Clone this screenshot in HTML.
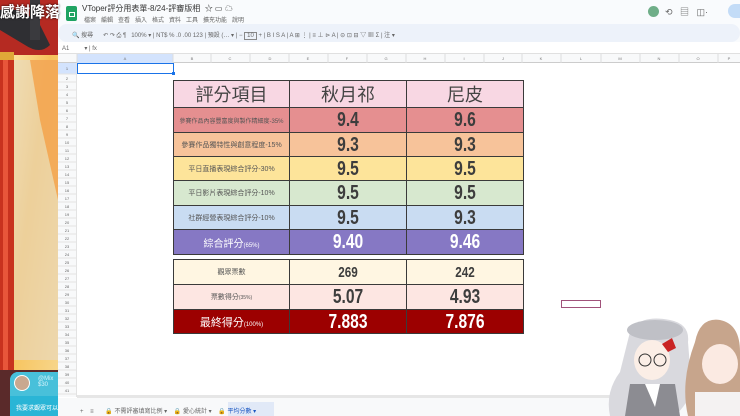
<!DOCTYPE html>
<html><head><meta charset="utf-8">
<style>
*{margin:0;padding:0;box-sizing:border-box}
body{width:740px;height:416px;overflow:hidden;background:#fff;position:relative;font-family:"Liberation Sans","Noto Sans CJK TC",sans-serif}
.a{position:absolute}
.t{position:absolute;border-collapse:collapse;table-layout:fixed}
.t td{border:1px solid #3a3a3a;text-align:center;padding:0;overflow:hidden;white-space:nowrap}
.lab{font-size:7px;color:#555}
.num{font-size:20px;line-height:1;font-weight:bold;color:#3d3d3d;font-family:"Liberation Sans Narrow","Liberation Sans",sans-serif;transform:scaleX(.78)}
.hd{font-size:18px;color:#444}
.tb{color:#666;font-size:6px}
</style></head><body>
<div class="a" style="left:58px;top:0;width:682px;height:42px;background:#f9fbfd"></div>
<div class="a" style="left:58px;top:24px;width:682px;height:18px;background:#edf2fa;border-radius:12px"></div>
<div class="a" style="left:58px;top:42px;width:682px;height:12px;background:#fff;border-bottom:1px solid #e0e0e0"></div>
<div class="a" style="left:66px;top:6px;width:11px;height:15px;background:#1ea362;border-radius:2px"></div>
<div class="a" style="left:69px;top:12px;width:6px;height:5px;border:1px solid #fff"></div>
<div class="a" style="left:82px;top:3px;font-size:8px;color:#333">VToper評分用表單-8/24-評審版相 &nbsp;☆ ▭ ☁</div>
<div class="a tb" style="left:84px;top:15px">檔案 &nbsp; 編輯 &nbsp; 查看 &nbsp; 插入 &nbsp; 格式 &nbsp; 資料 &nbsp; 工具 &nbsp; 擴充功能 &nbsp; 說明</div>
<div class="a tb" style="left:72px;top:30px;width:600px">🔍 搜尋 &nbsp;&nbsp;&nbsp;&nbsp; ↶ ↷ ⎙ ¶ &nbsp; 100% ▾ | NT$ % .0 .00 123 | 預設 (… ▾ | − <span style="border:1px solid #888;padding:0 2px">10</span> + | B I S A | A ⊞ ⋮ | ≡ ⊥ ⊳ A | ⊝ ⊡ ⊟ ▽ ▦ Σ | 注 ▾</div>
<div class="a" style="left:648px;top:6px;width:11px;height:11px;border-radius:50%;background:#6fae88"></div>
<div class="a tb" style="left:665px;top:5px;font-size:9px">⟲ &nbsp; ▤ &nbsp; ◫·</div>
<div class="a" style="left:728px;top:4px;width:20px;height:14px;border-radius:7px;background:#c3dcf7"></div>
<div class="a tb" style="left:62px;top:45px">A1 &nbsp;&nbsp;&nbsp;&nbsp;&nbsp;&nbsp;&nbsp; ▾ | fx</div>
<div class="a" style="left:58px;top:54px;width:682px;height:9px;background:#f8f9fa;border-bottom:1px solid #ccc"></div>
<div class="a" style="left:77px;top:54px;width:96px;height:9px;background:#d3e3fd"></div>
<svg class="a" style="left:0;top:54px" width="740" height="9"><g stroke="#ddd">
<line x1="77" y1="0" x2="77" y2="9"/><line x1="173" y1="0" x2="173" y2="9"/><line x1="211" y1="0" x2="211" y2="9"/><line x1="250" y1="0" x2="250" y2="9"/><line x1="289" y1="0" x2="289" y2="9"/><line x1="328" y1="0" x2="328" y2="9"/><line x1="367" y1="0" x2="367" y2="9"/><line x1="406" y1="0" x2="406" y2="9"/><line x1="445" y1="0" x2="445" y2="9"/><line x1="484" y1="0" x2="484" y2="9"/><line x1="522" y1="0" x2="522" y2="9"/><line x1="561" y1="0" x2="561" y2="9"/><line x1="601" y1="0" x2="601" y2="9"/><line x1="640" y1="0" x2="640" y2="9"/><line x1="679" y1="0" x2="679" y2="9"/><line x1="718" y1="0" x2="718" y2="9"/></g>
<g font-size="4" fill="#777" text-anchor="middle" font-family="Liberation Sans"><text x="125" y="6">A</text><text x="192" y="6">B</text><text x="230" y="6">C</text><text x="270" y="6">D</text><text x="308" y="6">E</text><text x="347" y="6">F</text><text x="386" y="6">G</text><text x="425" y="6">H</text><text x="464" y="6">I</text><text x="503" y="6">J</text><text x="541" y="6">K</text><text x="581" y="6">L</text><text x="620" y="6">M</text><text x="659" y="6">N</text><text x="698" y="6">O</text><text x="729" y="6">P</text></g></svg>
<svg class="a" style="left:58px;top:63px" width="19" height="334">
<rect width="19" height="334" fill="#f8f9fa"/><rect width="19" height="11" fill="#d3e3fd"/>
<g stroke="#e3e3e3"><line x1="18.5" y1="0" x2="18.5" y2="334"/>
<path d="M0 11H19M0 19H19M0 27H19M0 35H19M0 43H19M0 51H19M0 59H19M0 67H19M0 75H19M0 83H19M0 91H19M0 99H19M0 107H19M0 115H19M0 123H19M0 131H19M0 139H19M0 147H19M0 155H19M0 163H19M0 171H19M0 179H19M0 187H19M0 195H19M0 203H19M0 211H19M0 219H19M0 227H19M0 235H19M0 243H19M0 251H19M0 259H19M0 267H19M0 275H19M0 283H19M0 291H19M0 299H19M0 307H19M0 315H19M0 323H19M0 331H19"/></g>
<g font-size="4" fill="#666" text-anchor="middle" font-family="Liberation Sans"><text x="9" y="7">1</text><text x="9" y="17">2</text><text x="9" y="25">3</text><text x="9" y="33">4</text><text x="9" y="41">5</text><text x="9" y="49">6</text><text x="9" y="57">7</text><text x="9" y="65">8</text><text x="9" y="73">9</text><text x="9" y="81">10</text><text x="9" y="89">11</text><text x="9" y="97">12</text><text x="9" y="105">13</text><text x="9" y="113">14</text><text x="9" y="121">15</text><text x="9" y="129">16</text><text x="9" y="137">17</text><text x="9" y="145">18</text><text x="9" y="153">19</text><text x="9" y="161">20</text><text x="9" y="169">21</text><text x="9" y="177">22</text><text x="9" y="185">23</text><text x="9" y="193">24</text><text x="9" y="201">25</text><text x="9" y="209">26</text><text x="9" y="217">27</text><text x="9" y="225">28</text><text x="9" y="233">29</text><text x="9" y="241">30</text><text x="9" y="249">31</text><text x="9" y="257">32</text><text x="9" y="265">33</text><text x="9" y="273">34</text><text x="9" y="281">35</text><text x="9" y="289">36</text><text x="9" y="297">37</text><text x="9" y="305">38</text><text x="9" y="313">39</text><text x="9" y="321">40</text><text x="9" y="329">41</text></g></svg>
<div class="a" style="left:77px;top:63px;width:97px;height:11px;border:1.5px solid #1a73e8"></div>
<div class="a" style="left:172px;top:72px;width:3px;height:3px;background:#1a73e8"></div>
<table class="t" style="left:173px;top:80px;width:350px">
<colgroup><col style="width:116px"><col style="width:117px"><col style="width:117px"></colgroup>
<tr style="height:25px;background:#f8d7e3"><td class="hd">評分項目</td><td class="hd">秋月祁</td><td class="hd">尼皮</td></tr>
<tr style="height:25px;background:#e58f90"><td class="lab" style="font-size:6px">參賽作品內容豐富度與製作精細度-35%</td><td><div class="num">9.4</div></td><td><div class="num">9.6</div></td></tr>
<tr style="height:24px;background:#f7c39a"><td class="lab">參賽作品獨特性與創意程度-15%</td><td><div class="num">9.3</div></td><td><div class="num">9.3</div></td></tr>
<tr style="height:24px;background:#fde49a"><td class="lab">平日直播表現綜合評分-30%</td><td><div class="num">9.5</div></td><td><div class="num">9.5</div></td></tr>
<tr style="height:25px;background:#d7e8cf"><td class="lab">平日影片表現綜合評分-10%</td><td><div class="num">9.5</div></td><td><div class="num">9.5</div></td></tr>
<tr style="height:24px;background:#c9dcf2"><td class="lab">社群經營表現綜合評分-10%</td><td><div class="num">9.5</div></td><td><div class="num">9.3</div></td></tr>
<tr style="height:25px;background:#8678c4;color:#fff"><td style="font-size:10px">綜合評分<span style="font-size:6px">(65%)</span></td><td><div class="num" style="color:#fff">9.40</div></td><td><div class="num" style="color:#fff">9.46</div></td></tr>
</table>
<table class="t" style="left:173px;top:259px;width:350px">
<colgroup><col style="width:116px"><col style="width:117px"><col style="width:117px"></colgroup>
<tr style="height:25px;background:#fff6e2"><td class="lab">觀眾票數</td><td><div class="num" style="font-size:15px">269</div></td><td><div class="num" style="font-size:15px">242</div></td></tr>
<tr style="height:25px;background:#fde6e2"><td class="lab">票數得分<span style="font-size:5px">(35%)</span></td><td><div class="num">5.07</div></td><td><div class="num">4.93</div></td></tr>
<tr style="height:24px;background:#9c0000;color:#fff"><td style="font-size:11px">最終得分<span style="font-size:6px">(100%)</span></td><td><div class="num" style="color:#fff">7.883</div></td><td><div class="num" style="color:#fff">7.876</div></td></tr>
</table>
<div class="a" style="left:561px;top:300px;width:40px;height:8px;border:1px solid #a0527a"></div>
<div class="a" style="left:77px;top:395px;width:663px;height:3px;background:#e6e6e6"></div>
<div class="a" style="left:58px;top:398px;width:682px;height:18px;background:#f8f9fa"></div>
<div class="a" style="left:228px;top:402px;width:46px;height:14px;background:#e1e9f7"></div>
<div class="a tb" style="left:80px;top:406px;font-size:6px">+ &nbsp;&nbsp; ≡ &nbsp;&nbsp;&nbsp;&nbsp;&nbsp; 🔒 不需評審填寫比例 ▾ &nbsp;&nbsp; 🔒 愛心統計 ▾ &nbsp;&nbsp; <span style="color:#1a57c2">🔒 平均分數 ▾</span></div>
<svg class="a" style="left:0;top:0" width="58" height="416">
<defs><linearGradient id="g" x1="0" y1="0" x2="1" y2="1"><stop offset="0" stop-color="#fff3c0"/><stop offset=".5" stop-color="#f7c25a"/><stop offset="1" stop-color="#f7d890"/></linearGradient></defs>
<rect width="58" height="416" fill="url(#g)"/>
<rect x="14" y="60" width="44" height="300" fill="#e6d9c4" opacity=".6"/>
<polygon points="30,60 58,60 58,200 40,120" fill="#f59a3a" opacity=".7"/>
<rect x="0" y="0" width="14" height="416" fill="#c8321e"/>
<rect x="3" y="60" width="5" height="356" fill="#e8563a"/>
<rect x="0" y="0" width="58" height="55" fill="#b52a22"/>
<path d="M0 10 Q20 5 40 25 L50 45 Q40 55 25 45 L0 30Z" fill="#2f2f33"/>
<rect x="30" y="0" width="10" height="40" fill="#3a3a3e"/>
<rect x="0" y="52" width="14" height="8" fill="#e0a838"/>
<rect x="0" y="370" width="58" height="46" fill="#5a2a2a"/>
</svg>
<div class="a" style="left:0;top:1px;font-size:15px;font-weight:bold;color:#fff;white-space:nowrap;text-shadow:0 0 2px #000;font-family:'Noto Sans CJK TC',sans-serif">感謝降落</div>
<div class="a" style="left:10px;top:372px;width:48px;height:44px;background:#2ab5d6;border-radius:8px 0 0 0"></div>
<div class="a" style="left:10px;top:372px;width:48px;height:24px;background:#48c0da;border-radius:8px 0 0 0"></div>
<div class="a" style="left:14px;top:375px;width:16px;height:16px;border-radius:50%;background:#c9a890;border:1px solid #fff"></div>
<div class="a" style="left:38px;top:376px;font-size:6px;color:#d8f4fb">@Mix<br>$30</div>
<div class="a" style="left:16px;top:403px;font-size:6px;color:#fff;white-space:nowrap">我要求觀眾可以</div>
<svg class="a" style="left:600px;top:312px" width="140" height="104">
<path d="M30 20 Q40 2 70 8 Q90 12 88 30 L92 80 Q80 104 70 104 L10 104 Q5 80 20 60 Z" fill="#d9d9de"/>
<ellipse cx="55" cy="18" rx="28" ry="10" fill="#bfc0c6"/>
<ellipse cx="52" cy="48" rx="18" ry="20" fill="#fbeee6"/>
<circle cx="45" cy="48" r="6" fill="none" stroke="#333" stroke-width="1"/><circle cx="60" cy="48" r="6" fill="none" stroke="#333" stroke-width="1"/>
<path d="M62 32 L72 26 L76 36 L68 40Z" fill="#c92424"/>
<path d="M30 72 L75 72 L80 104 L25 104Z" fill="#8c8c92"/><path d="M45 72 L60 72 L55 95Z" fill="#fff"/>
<path d="M95 30 Q100 5 120 8 Q140 12 140 40 L140 104 L88 104 Q80 70 95 30Z" fill="#c7a58c"/>
<ellipse cx="120" cy="52" rx="18" ry="20" fill="#fbeae2"/>
<path d="M95 80 L140 80 L140 104 L95 104Z" fill="#f4f2f2"/>
</svg>
</body></html>
